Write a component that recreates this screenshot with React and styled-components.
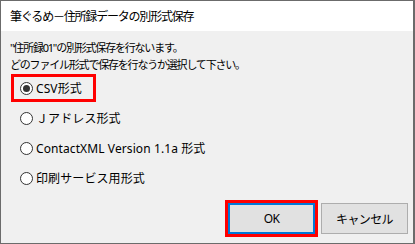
import React from 'react';
import styled, { createGlobalStyle } from 'styled-components';

const GlobalStyle = createGlobalStyle`
	html, body {
		margin: 0;
		padding: 0;
		background: #ffffff;
	}
	body {
		font-family: "Noto Sans", "Noto Sans CJK JP", sans-serif;
		color: #000000;
	}
`;

const options = [
	{ label: 'CSV形式', checked: true, marked: true },
	{ label: 'Ｊアドレス形式' },
	{ label: 'ContactXML Version 1.1a 形式' },
	{ label: '印刷サービス用形式' },
];

const App = () => {
	return (
		<>
			<GlobalStyle />
			<Window>
				<TitleBar>筆ぐるめ－住所録データの別形式保存</TitleBar>
				<Body>
					<Message>
						<p>"住所録01"の別形式保存を行ないます。</p>
						<p>どのファイル形式で保存を行なうか選択して下さい。</p>
					</Message>
					<OptionList>
						{options.map((o) => (
							<Option key={o.label} $marked={o.marked}>
								<Radio $checked={o.checked} />
								<span>{o.label}</span>
							</Option>
						))}
					</OptionList>
					<Footer>
						<Button $primary>OK</Button>
						<Button>キャンセル</Button>
					</Footer>
				</Body>
			</Window>
		</>
	);
};

const Window = styled.div`
	width: 415px;
	height: 244px;
	box-sizing: border-box;
	border: 1px solid #6b6b6b;
	border-right-width: 2px;
	display: flex;
	flex-direction: column;
	background: #f0f0f0;
`;

const TitleBar = styled.div`
	height: 30px;
	flex-shrink: 0;
	background: #ffffff;
	display: flex;
	align-items: center;
	padding-left: 9px;
	font-size: 12px;
	letter-spacing: -1.2px;
`;

const Body = styled.div`
	flex: 1;
	display: flex;
	flex-direction: column;
	padding: 8px 5px 9px 9px;
`;

const Message = styled.div`
	font-size: 11px;
	letter-spacing: -1.2px;
	p {
		margin: 0;
		line-height: 17px;
		height: 17px;
	}
`;

const OptionList = styled.div`
	display: flex;
	flex-direction: column;
	align-items: flex-start;
`;

const Option = styled.label`
	height: 30px;
	display: inline-flex;
	align-items: center;
	gap: 3px;
	padding: 0 15px 0 10px;
	font-size: 12px;
	letter-spacing: 0.1px;
	outline: ${(p) => (p.$marked ? '3px solid #ff0000' : 'none')};
	outline-offset: -4px;
`;

const Radio = styled.span`
	width: 13px;
	height: 13px;
	box-sizing: border-box;
	border-radius: 50%;
	border: 1px solid #333333;
	background: #ffffff;
	display: inline-flex;
	align-items: center;
	justify-content: center;
	flex-shrink: 0;
	&::after {
		content: '';
		width: 7px;
		height: 7px;
		border-radius: 50%;
		background: #333333;
		display: ${(p) => (p.$checked ? 'block' : 'none')};
	}
`;

const Footer = styled.div`
	margin-top: auto;
	display: flex;
	justify-content: flex-end;
	gap: 6px;
`;

const Button = styled.button`
	width: 87px;
	height: 31px;
	box-sizing: border-box;
	font-family: inherit;
	font-size: 12px;
	letter-spacing: -0.6px;
	color: #000000;
	background: #e1e1e1;
	border: ${(p) => (p.$primary ? '2px solid #0078d7' : '1px solid #adadad')};
	outline: ${(p) => (p.$primary ? '3px solid #ff0000' : 'none')};
	padding: 0;
`;

export default App;
